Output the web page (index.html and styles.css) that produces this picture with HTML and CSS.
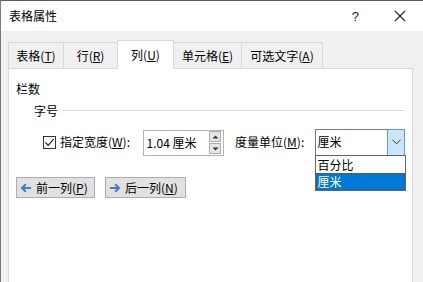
FILE: index.html
```html
<!DOCTYPE html>
<html lang="zh-CN">
<head>
<meta charset="utf-8">
<title>表格属性</title>
<link rel="stylesheet" href="styles.css">
</head>
<body>
<div class="window">
  <div class="titlebar">
    <span class="title">表格属性</span>
    <span class="help">?</span>
    <span class="close"><svg width="12" height="12" viewBox="0 0 12 12"><path d="M1 1L11 11M11 1L1 11" stroke="#222" stroke-width="1.1" fill="none"/></svg></span>
  </div>
  <div class="body">
    <div class="tabs">
      <div class="tab t1">表格(<u>T</u>)</div>
      <div class="tab t2">行(<u>R</u>)</div>
      <div class="tab t3 active">列(<u>U</u>)</div>
      <div class="tab t4">单元格(<u>E</u>)</div>
      <div class="tab t5">可选文字(<u>A</u>)</div>
    </div>
    <div class="panel">
      <div class="heading">栏数</div>
      <div class="group">
        <span class="group-title">字号</span>
        <span class="group-line"></span>
      </div>
      <div class="controls">
        <span class="checkbox"><svg width="11" height="11" viewBox="0 0 11 11"><path d="M1.5 5.5L4.2 8.3L9.6 2.2" stroke="#222" stroke-width="1.2" fill="none"/></svg></span>
        <span class="label l1">指定宽度(<u>W</u>):</span>
        <div class="spin">
          <span class="spin-text">1.04 厘米</span>
          <span class="spin-btns">
            <span class="spin-btn"><svg width="7" height="4" viewBox="0 0 7 4"><path d="M0.5 3.5L3.5 0.5L6.5 3.5Z" fill="#333"/></svg></span>
            <span class="spin-btn"><svg width="7" height="4" viewBox="0 0 7 4"><path d="M0.5 0.5L3.5 3.5L6.5 0.5Z" fill="#333"/></svg></span>
          </span>
        </div>
        <span class="label l2">度量单位(<u>M</u>):</span>
        <div class="select">
          <span class="select-text">厘米</span>
          <span class="select-btn"><svg width="9" height="6" viewBox="0 0 9 6"><path d="M0.5 0.8L4.5 4.8L8.5 0.8" stroke="#333" stroke-width="1" fill="none"/></svg></span>
          <div class="list">
            <div class="option">百分比</div>
            <div class="option selected">厘米</div>
          </div>
        </div>
      </div>
      <div class="buttons">
        <button class="btn b1"><svg width="12" height="10" viewBox="0 0 12 10"><path d="M11 5H2.5M5.8 1.3L2 5L5.8 8.7" stroke="#3f7cc0" stroke-width="2" fill="none"/></svg><span class="btn-text">前一列(<u>P</u>)</span></button>
        <button class="btn b2"><svg width="12" height="10" viewBox="0 0 12 10"><path d="M1 5H9.5M6.2 1.3L10 5L6.2 8.7" stroke="#3f7cc0" stroke-width="2" fill="none"/></svg><span class="btn-text">后一列(<u>N</u>)</span></button>
      </div>
    </div>
  </div>
</div>
</body>
</html>
```

FILE: styles.css
```css
html, body {
  margin: 0;
  padding: 0;
}
body {
  width: 423px;
  height: 282px;
  overflow: hidden;
  font-family: "Noto Sans CJK SC", "Microsoft YaHei", sans-serif;
  font-size: 12px;
  color: #000;
  background: #f0f0f0;
}
u {
  text-decoration: underline;
  text-underline-offset: 1px;
}
.window {
  height: 282px;
  box-sizing: border-box;
  border-top: 1px solid #5a5a5a;
  border-left: 1px solid #7a7a7a;
  display: flex;
  flex-direction: column;
  background: #f0f0f0;
}
.titlebar {
  height: 30px;
  background: #fff;
  display: flex;
  align-items: center;
  flex-shrink: 0;
}
.title {
  margin-left: 8px;
  font-size: 12px;
  line-height: 16px;
  flex: 1;
}
.help {
  font-size: 13px;
  font-family: "Liberation Sans", sans-serif;
  margin-right: 35px;
  color: #222;
}
.close {
  width: 12px;
  height: 12px;
  margin-right: 17px;
  display: flex;
}
.body {
  flex: 1;
  display: flex;
  flex-direction: column;
  padding: 9px 10px 0 7px;
}
.tabs {
  display: flex;
  align-items: flex-end;
  height: 28px;
  position: relative;
  z-index: 1;
}
.tab {
  box-sizing: border-box;
  height: 26px;
  border: 1px solid #d9d9d9;
  border-bottom: none;
  background: #f0f0f0;
  display: flex;
  align-items: center;
  justify-content: center;
  line-height: 16px;
  margin-left: -1px;
}
.t1 { width: 56px; margin-left: 0; }
.t2 { width: 55px; }
.t3 { width: 57px; }
.t4 { width: 69px; }
.t5 { width: 82px; }
.tab.active {
  height: 29px;
  background: #fff;
  margin-bottom: -1px;
  padding-bottom: 1px;
  position: relative;
  z-index: 2;
}
.panel {
  flex: 1;
  background: #fff;
  border: 1px solid #d9d9d9;
  border-bottom: none;
  padding: 12px 7px 0 7px;
  position: relative;
}
.heading {
  line-height: 16px;
}
.group {
  margin-top: 6px;
  margin-left: 18px;
  display: flex;
  align-items: center;
  line-height: 16px;
}
.group-line {
  flex: 1;
  height: 1px;
  background: #dcdcdc;
  margin-left: 4px;
  margin-top: -1px;
}
.controls {
  margin-top: 9px;
  margin-left: 27px;
  display: flex;
  align-items: center;
  height: 28px;
}
.checkbox {
  box-sizing: border-box;
  width: 13px;
  height: 13px;
  border: 1px solid #333;
  display: flex;
  align-items: center;
  justify-content: center;
  background: #fff;
  margin-top: 1px;
}
.label {
  line-height: 16px;
  white-space: nowrap;
}
.l1 {
  margin-left: 4px;
  width: 83px;
}
.l2 {
  margin-left: 11px;
  width: 80px;
}
.spin {
  box-sizing: border-box;
  width: 82px;
  height: 26px;
  border: 1px solid #b4b4b4;
  display: flex;
  align-items: center;
  justify-content: space-between;
  padding: 0 2px 0 3px;
  margin-top: 1px;
}
.spin-text {
  line-height: 16px;
  white-space: pre;
}
.spin-btns {
  display: flex;
  flex-direction: column;
  gap: 1px;
}
.spin-btn {
  box-sizing: border-box;
  width: 12px;
  height: 11px;
  border: 1px solid #adadad;
  background: #e6e6e6;
  display: flex;
  align-items: center;
  justify-content: center;
}
.select {
  box-sizing: border-box;
  width: 91px;
  height: 27px;
  border: 1px solid #7a7a7a;
  display: flex;
  align-items: stretch;
  position: relative;
  background: #fff;
}
.select-text {
  flex: 1;
  padding-left: 2px;
  display: flex;
  align-items: center;
  line-height: 16px;
}
.select-btn {
  box-sizing: border-box;
  width: 18px;
  margin: -1px -1px -1px 0;
  border: 1px solid #569de5;
  background: #cce4f7;
  display: flex;
  align-items: center;
  justify-content: center;
}
.list {
  position: absolute;
  left: -1px;
  top: 25px;
  width: 91px;
  box-sizing: border-box;
  border: 1px solid #646464;
  background: #fff;
  z-index: 5;
}
.option {
  height: 17px;
  line-height: 17px;
  padding-left: 2px;
  box-sizing: border-box;
}
.option.selected {
  background: #0078d7;
  color: #fff;
  outline: 1px dotted #555;
  outline-offset: -1px;
}
.buttons {
  margin-top: 21px;
  display: flex;
  gap: 10px;
}
.btn {
  box-sizing: border-box;
  height: 21px;
  border: 1px solid #adadad;
  background: #e1e1e1;
  font-family: inherit;
  font-size: 12px;
  color: #000;
  display: flex;
  align-items: center;
  padding: 0 0 0 3px;
  gap: 4px;
  margin: 0;
}
.btn-text {
  white-space: nowrap;
  line-height: 16px;
}
.b1 { width: 79px; }
.b2 { width: 81px; }
```
